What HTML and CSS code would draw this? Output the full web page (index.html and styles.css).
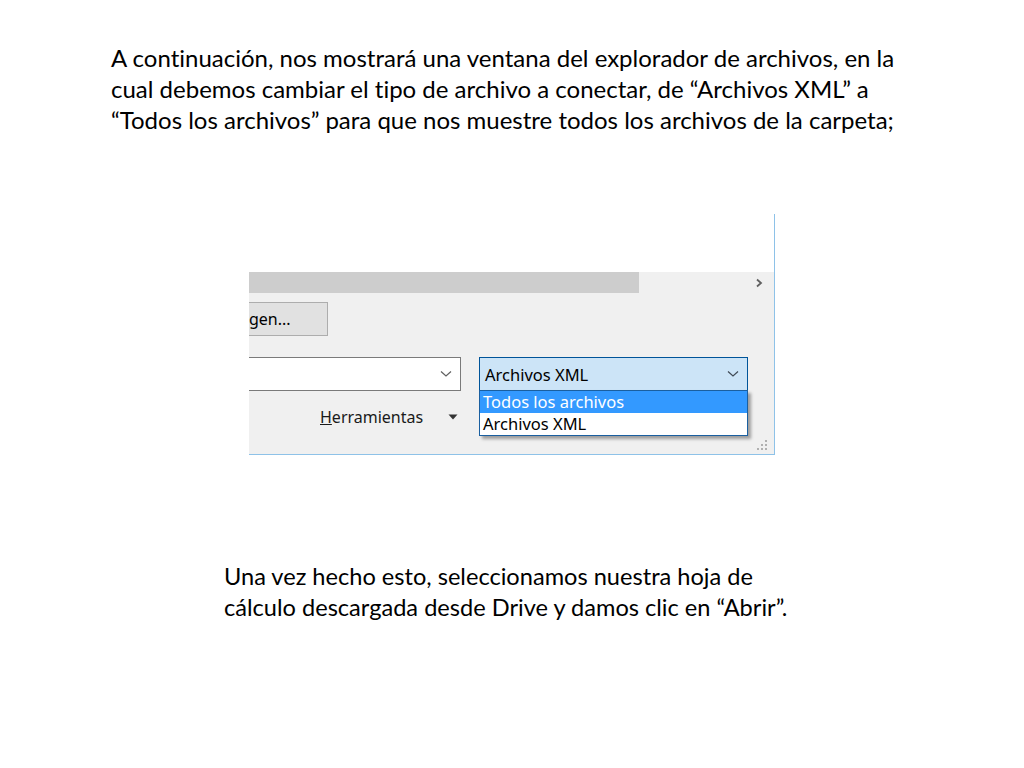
FILE: index.html
```html
<!DOCTYPE html>
<html lang="es">
<head>
<meta charset="utf-8">
<link rel="stylesheet" href="styles.css">
</head>
<body>
<div class="slide">
  <p class="intro">A continuación, nos mostrará una ventana del explorador de archivos, en la<br>cual debemos cambiar el tipo de archivo a conectar, de “Archivos XML” a<br>“Todos los archivos” para que nos muestre todos los archivos de la carpeta;</p>

  <div class="shot">
    <div class="filelist"></div>
    <div class="hscroll">
      <div class="thumb"></div>
      <div class="arrow">
        <svg width="10" height="10" viewBox="0 0 10 10"><path d="M3 1.5 L7 5 L3 8.5" fill="none" stroke="#606060" stroke-width="1.8"/></svg>
      </div>
    </div>
    <div class="panel">
      <div class="row row-btn">
        <div class="btn">gen...</div>
      </div>
      <div class="row row-combo">
        <div class="combo name">
          <span></span>
          <svg class="chev" width="12" height="8" viewBox="0 0 12 8"><path d="M1 1.5 L6 6 L11 1.5" fill="none" stroke="#606060" stroke-width="1.2"/></svg>
        </div>
        <div class="typewrap">
          <div class="combo type">
            <span>Archivos XML</span>
            <svg class="chev" width="12" height="8" viewBox="0 0 12 8"><path d="M1 1.5 L6 6 L11 1.5" fill="none" stroke="#404a55" stroke-width="1.2"/></svg>
          </div>
          <ul class="droplist">
            <li class="sel">Todos los archivos</li>
            <li>Archivos XML</li>
          </ul>
        </div>
      </div>
      <div class="row row-tools">
        <div class="tools"><span class="u">H</span>erramientas</div>
        <svg class="tri" width="10" height="6" viewBox="0 0 10 6"><path d="M0.5 0.5 L9.5 0.5 L5 5.5 Z" fill="#333"/></svg>
      </div>
      <svg class="grip" width="12" height="12" viewBox="0 0 12 12">
        <g fill="#b0b0b0">
          <rect x="9" y="1" width="2" height="2"/>
          <rect x="5" y="5" width="2" height="2"/><rect x="9" y="5" width="2" height="2"/>
          <rect x="1" y="9" width="2" height="2"/><rect x="5" y="9" width="2" height="2"/><rect x="9" y="9" width="2" height="2"/>
        </g>
      </svg>
    </div>
  </div>

  <p class="outro">Una vez hecho esto, seleccionamos nuestra hoja de<br>cálculo descargada desde Drive y damos clic en “Abrir”.</p>
</div>
</body>
</html>
```

FILE: styles.css
```css
html, body {
  margin: 0;
  padding: 0;
  background: #ffffff;
}

.slide {
  width: 1024px;
  height: 768px;
  position: relative;
  overflow: hidden;
  font-family: "Lato", "Liberation Sans", sans-serif;
  font-variant-ligatures: none;
  color: #000;
}

.intro {
  margin: 0;
  padding: 42px 0 0 111px;
  font-size: 24px;
  line-height: 31px;
  white-space: nowrap;
}

.outro {
  margin: 0;
  padding: 0 0 0 224px;
  margin-top: 106px;
  font-size: 23.6px;
  line-height: 31px;
  white-space: nowrap;
}

/* screenshot of dialog */
.shot {
  margin: 79px 0 0 249px;
  width: 525px;
  height: 240px;
  border-right: 1px solid #8ec2e8;
  border-bottom: 1px solid #8ec2e8;
  display: flex;
  flex-direction: column;
  font-family: "Noto Sans", "Open Sans", sans-serif;
  font-size: 15px;
  color: #000;
}

.filelist {
  height: 58px;
  background: #ffffff;
}

.hscroll {
  height: 22px;
  background: #f0f0f0;
  display: flex;
  align-items: center;
}

.hscroll .thumb {
  width: 390px;
  height: 21px;
  background: #cdcdcd;
  align-self: flex-start;
}

.hscroll .arrow {
  margin-left: auto;
  width: 22px;
  height: 22px;
  display: flex;
  align-items: center;
  justify-content: center;
  margin-right: 4px;
}

.panel {
  flex: 1;
  background: #f0f0f0;
  position: relative;
  display: flex;
  flex-direction: column;
}

.row-btn {
  padding-top: 8px;
  height: 34px;
}

.btn {
  width: 79px;
  height: 34px;
  box-sizing: border-box;
  background: #e1e1e1;
  border: 1px solid #adadad;
  border-left: none;
  display: flex;
  align-items: center;
  font-size: 16px;
}

.row-combo {
  margin-top: 21px;
  display: flex;
  align-items: flex-start;
}

.combo {
  height: 34px;
  box-sizing: border-box;
  display: flex;
  align-items: center;
  justify-content: space-between;
}

.combo.name {
  width: 212px;
  background: #ffffff;
  border: 1px solid #7a7a7a;
  border-left: none;
  padding-right: 8px;
}

.typewrap {
  margin-left: 18px;
  width: 269px;
  position: relative;
}

.combo.type {
  width: 269px;
  background: #cce4f7;
  border: 1px solid #005499;
  padding: 0 8px 0 5px;
  font-size: 16.5px;
}

.droplist {
  position: absolute;
  left: 0;
  top: 33px;
  width: 269px;
  box-sizing: border-box;
  margin: 0;
  padding: 0;
  list-style: none;
  background: #ffffff;
  border: 1px solid #1a5fa0;
  box-shadow: 3px 3px 3px rgba(0, 0, 0, 0.35);
  font-size: 16.5px;
  z-index: 2;
}

.droplist li {
  height: 22px;
  line-height: 22px;
  padding-left: 3px;
}

.droplist li.sel {
  background: #3399ff;
  color: #ffffff;
}

.row-tools {
  margin-top: 15px;
  display: flex;
  align-items: center;
  padding-left: 71px;
}

.tools {
  font-size: 16px;
  color: #1a1a1a;
}

.tools .u {
  text-decoration: underline;
}

.tri {
  margin-left: 25px;
}

.grip {
  position: absolute;
  right: 6px;
  bottom: 3px;
}
```
